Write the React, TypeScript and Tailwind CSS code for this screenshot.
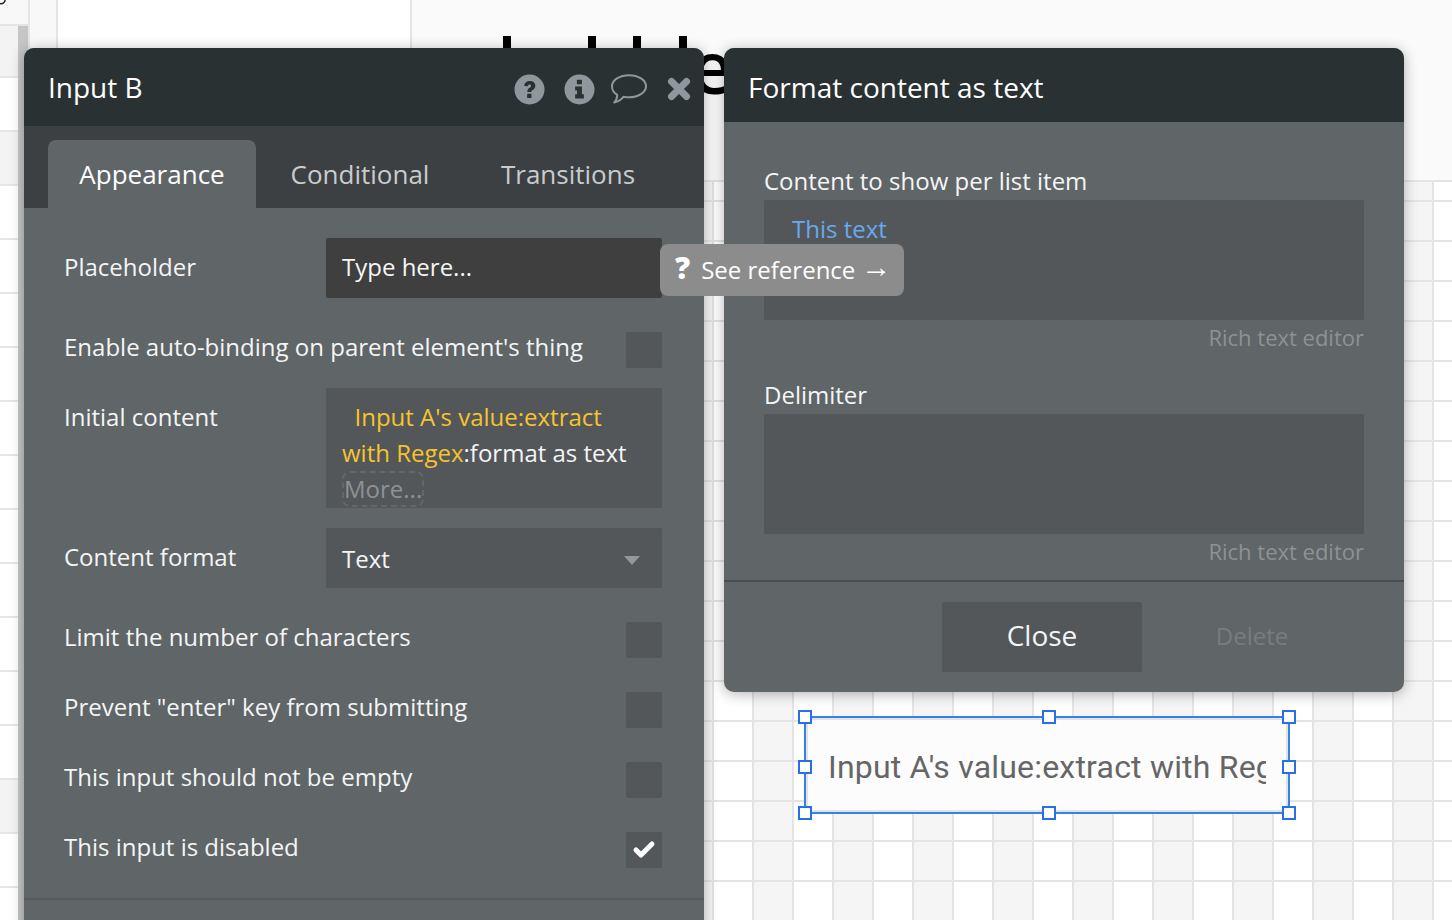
import { Check } from 'lucide-react'

const font = { fontFamily: '"Open Sans", sans-serif' }

const stripRows = [
  'h-[52px] bg-[#f3f3f3]',
  'h-[54px] bg-white',
  'h-[54px] bg-[#f3f3f3]',
  'h-[54px] bg-white',
  'h-[54px] bg-white',
  'h-[54px] bg-white',
  'h-[54px] bg-white',
  'h-[54px] bg-white',
  'h-[54px] bg-white',
  'h-[54px] bg-white',
  'h-[54px] bg-white',
  'h-[54px] bg-white',
  'h-[54px] bg-white',
  'h-[54px] bg-white',
  'h-[54px] bg-[#f3f3f3]',
  'h-[54px] bg-white',
  'h-[54px] bg-white',
]

const QuestionDot = () => (
  <svg viewBox="0 0 32 32" className="h-[31px] w-[31px]">
    <circle cx="16" cy="16" r="15.5" fill="#8f979c" />
    <path d="M10.500 12.500c.3-3.400 2.700-5.200 5.800-5.200 3.300 0 5.700 2 5.700 4.900 0 2.200-1.200 3.300-2.700 4.300-1.100.7-1.500 1.200-1.500 2.200h-4c-.1-2.200.7-3.400 2.200-4.400 1-.7 1.600-1.200 1.600-2 0-.9-.7-1.400-1.500-1.400-1 0-1.700.6-1.800 1.700z" fill="#2a3133" />
    <rect x="13.600" y="20.500" width="4.400" height="4.400" rx="0.6" fill="#2a3133" />
  </svg>
)

const InfoDot = () => (
  <svg viewBox="0 0 32 32" className="h-[31px] w-[31px]">
    <circle cx="16" cy="16" r="15.500" fill="#8f979c" />
    <rect x="13.300" y="6" width="5.200" height="4.600" rx="0.6" fill="#2a3133" />
    <path d="M11.500 12.800h7v8.200h2v4.200h-9v-4.200h2v-4h-2z" fill="#2a3133" />
  </svg>
)

const Bubble = () => (
  <svg viewBox="0 0 36 30" className="h-[30px] w-[36px]" fill="none" stroke="#8f979c" strokeWidth="2">
    <path d="M18 1.200c9.300 0 17 4.900 17 11 0 6.200-7.700 11.100-17 11.100-2 0-3.700-.2-5.400-.6-2 2.700-5.400 5-9.400 5.800 1.700-1.600 2.900-4 3.100-7.600C3 18.900 1 15.700 1 12.200c0-6.100 7.700-11 17-11z" strokeLinejoin="round" />
  </svg>
)

const CloseX = () => (
  <svg viewBox="0 0 24 24" className="h-[24px] w-[24px]" fill="none" stroke="#8f979c" strokeWidth="7" strokeLinecap="round">
    <path d="M4.500 4.500l15 15M19.500 4.500l-15 15" />
  </svg>
)

const Row = ({ label, checked }: { label: string; checked?: boolean }) => (
  <div className="flex h-[70px] items-center justify-between pl-[40px] pr-[42px]">
    <span className="-mt-[6px] text-[24px] leading-[36px] text-[#f4f5f5]">{label}</span>
    <span className="flex h-[36px] w-[36px] items-center justify-center rounded-[2px] bg-[#53575a]">
      {checked && <Check size={24} strokeWidth={5} className="text-white" />}
    </span>
  </div>
)

const Handle = ({ className }: { className: string }) => (
  <span className={`absolute h-[14px] w-[14px] border-2 border-[#2a6fe8] bg-white ${className}`} />
)

export default function App() {
  return (
    <div className="relative h-[920px] w-[1452px] overflow-hidden bg-[#fafafa]" style={font}>
      {/* left strip of the page behind */}
      <svg viewBox="0 0 8 6" className="absolute left-0 top-0 z-10 h-[6px] w-[8px]" fill="none" stroke="#222" strokeWidth="1.500">
        <path d="M0 3.500c2.500.8 4.500-.4 5.200-3.500" />
      </svg>
      <div className="absolute left-0 top-0 h-[26px] w-[28px] border-b-2 border-[#e4e4e4] bg-[#f8f8f8]" />
      <div className="absolute left-0 top-[26px] flex w-[18px] flex-col">
        {stripRows.map((row, i) => (
          <div key={i} className={`${row} shrink-0 border-b-2 border-[#e6e6e6]`} />
        ))}
      </div>
      <div className="absolute left-[18px] top-[26px] h-[894px] w-[10px] bg-[#c6c6c6]" />
      <div className="absolute left-[28px] top-0 h-[920px] w-[30px] border-x-2 border-[#e4e4e4] bg-[#f8f8f8]" />
      <div className="absolute left-[58px] top-0 h-[920px] w-[354px] border-r-2 border-[#e4e4e4] bg-white" />

      {/* canvas heading, cut off by the panels */}
      <div className="absolute left-[503px] top-[36px] flex">
        <span className="mr-[77px] h-[20px] w-[8px] bg-black" />
        <span className="mr-[37px] h-[20px] w-[8px] bg-black" />
        <span className="mr-[38px] h-[20px] w-[8px] bg-black" />
        <span className="h-[20px] w-[8px] bg-black" />
      </div>
      <span className="absolute left-[691px] top-[30px] text-[72px] font-semibold leading-[72px] text-black">e</span>

      {/* grid */}
      <div className="absolute left-[672px] top-[180px] h-[740px] w-[780px] border-t-2 border-[#e4e4e4] bg-[repeating-linear-gradient(90deg,#e4e4e4_0,#e4e4e4_2px,#f5f5f5_2px,#f5f5f5_40px,#e4e4e4_40px,#e4e4e4_42px,#ffffff_42px,#ffffff_80px)]" />
      <div className="absolute left-[672px] top-[200px] h-[720px] w-[780px] bg-[repeating-linear-gradient(180deg,#e4e4e4_0,#e4e4e4_2px,transparent_2px,transparent_40px)]" />

      {/* selected input on the canvas */}
      <div className="absolute left-[804px] top-[716px] h-[98px] w-[486px] border-2 border-[#3584e4]">
        <div className="flex h-full items-center rounded-[2px] border-2 border-[#e2e2e2] bg-[#fcfcfc] pl-[20px] pr-[20px] pt-[3px]">
          <div className="overflow-hidden whitespace-nowrap text-[32px] tracking-[0.2px] text-[#666666]" style={{ fontFamily: 'Roboto, sans-serif' }}>
            Input A's value:extract with Regex
          </div>
        </div>
        <Handle className="-left-[8px] -top-[8px]" />
        <Handle className="left-[236px] -top-[8px]" />
        <Handle className="-right-[8px] -top-[8px]" />
        <Handle className="-left-[8px] top-[42px]" />
        <Handle className="-right-[8px] top-[42px]" />
        <Handle className="-bottom-[8px] -left-[8px]" />
        <Handle className="-bottom-[8px] left-[236px]" />
        <Handle className="-bottom-[8px] -right-[8px]" />
      </div>

      {/* Input B window */}
      <div className="absolute left-[24px] top-[48px] flex h-[900px] w-[680px] flex-col rounded-t-[10px] bg-[#606568] shadow-[0_2px_14px_rgba(0,0,0,0.3)]">
        <div className="flex h-[78px] shrink-0 items-center justify-between rounded-t-[10px] bg-[#2a3133] pl-[24px] pr-[13px]">
          <span className="text-[28px] text-white">Input B</span>
          <div className="mt-[4px] flex items-center">
            <QuestionDot />
            <span className="ml-[19px]"><InfoDot /></span>
            <span className="ml-[16px]"><Bubble /></span>
            <span className="ml-[20px]"><CloseX /></span>
          </div>
        </div>
        <div className="flex h-[82px] shrink-0 items-end bg-[#3c4043] pl-[24px]">
          <div className="flex h-[68px] w-[208px] items-center justify-center rounded-t-[8px] bg-[#606568] text-[26px] text-white">Appearance</div>
          <div className="flex h-[68px] w-[208px] items-center justify-center text-[26px] text-[#c9cccd]">Conditional</div>
          <div className="flex h-[68px] w-[208px] items-center justify-center text-[26px] text-[#c9cccd]">Transitions</div>
        </div>
        <div className="flex flex-col pt-[30px]">
          <div className="flex h-[60px] items-center justify-between pl-[40px] pr-[42px]">
            <span className="pb-[2px] text-[24px] text-[#f4f5f5]">Placeholder</span>
            <div className="flex h-[60px] w-[336px] items-center rounded-[2px] bg-[#3f3f3f] px-[16px] pb-[2px] text-[24px] text-[#f4f5f5]">Type here...</div>
          </div>
          <div className="mt-[17px]">
            <Row label="Enable auto-binding on parent element's thing" />
          </div>
          <div className="mt-[3px] flex items-start justify-between pl-[40px] pr-[42px]">
            <span className="mt-[11px] text-[24px] leading-[36px] text-[#f4f5f5]">Initial content</span>
            <div className="h-[120px] w-[336px] overflow-hidden rounded-[2px] bg-[#53575a] px-[16px] pt-[11px] text-[24px] leading-[36px] text-[#f4f5f5]">
              <span className="text-[#f6c42d]">{'\u00a0\u00a0'}Input A's value:extract with Regex</span>:format as text
              <div className="w-fit rounded-[8px] border-2 border-dashed border-[#63676a] leading-[32px] text-[#8e9295]">More...</div>
            </div>
          </div>
          <div className="mt-[20px] flex items-center justify-between pl-[40px] pr-[42px]">
            <span className="pb-[2px] text-[24px] text-[#f4f5f5]">Content format</span>
            <div className="flex h-[60px] w-[336px] items-center justify-between rounded-[2px] bg-[#53575a] pl-[16px] pr-[22px] text-[24px] text-[#f4f5f5]">
              <span className="pt-[2px]">Text</span>
              <span className="mt-[4px] h-0 w-0 border-x-[8px] border-t-[9px] border-x-transparent border-t-[#92979a]" />
            </div>
          </div>
          <div className="mt-[17px] flex flex-col">
            <Row label="Limit the number of characters" />
            <Row label={'Prevent "enter" key from submitting'} />
            <Row label="This input should not be empty" />
            <Row label="This input is disabled" checked />
          </div>
          <div className="mt-[13px] border-t-2 border-[#585c5f]" />
        </div>
      </div>

      {/* Format content as text window */}
      <div className="absolute left-[724px] top-[48px] flex h-[644px] w-[680px] flex-col rounded-[10px] bg-[#606568] shadow-[0_2px_14px_rgba(0,0,0,0.3)]">
        <div className="flex h-[74px] shrink-0 items-center rounded-t-[10px] bg-[#2a3133] pl-[24px] pt-[4px] text-[28px] text-white">Format content as text</div>
        <div className="flex flex-1 flex-col px-[40px] pt-[41px]">
          <span className="pb-[1px] text-[24px] leading-[36px] text-[#f4f5f5]">Content to show per list item</span>
          <div className="h-[120px] rounded-[2px] bg-[#53575a] pl-[28px] pt-[11px] text-[24px] leading-[36px] text-[#68a9ef]">This text</div>
          <span className="mb-[1px] mt-[2px] self-end text-[22px] leading-[30px] text-[#8e9295]">Rich text editor</span>
          <span className="mb-[1px] mt-[24px] text-[24px] leading-[36px] text-[#f4f5f5]">Delimiter</span>
          <div className="h-[120px] rounded-[2px] bg-[#53575a]" />
          <span className="mt-[2px] self-end text-[22px] leading-[30px] text-[#8e9295]">Rich text editor</span>
        </div>
        <div className="flex h-[112px] shrink-0 items-start gap-[40px] border-t-2 border-[#4b4e50] pl-[218px] pt-[20px]">
          <div className="flex h-[70px] w-[200px] items-center justify-center rounded-[2px] bg-[#53575a] pb-[4px] text-[28px] text-[#f4f5f5]">Close</div>
          <div className="flex h-[70px] w-[140px] items-center justify-center pb-[2px] text-[24px] text-[#787c7f]">Delete</div>
        </div>
      </div>

      {/* tooltip */}
      <div className="absolute left-[660px] top-[244px] flex h-[52px] w-[244px] items-center rounded-[8px] bg-[#8c8c8c] pl-[15px] text-[24px] text-white">
        <span className="mr-[11px] -mt-[4px] text-[30px] font-extrabold leading-[36px]">?</span>
        <span className="-mt-[1px]">See reference</span>
        <span className="-mt-[6px] ml-[6px] text-[30px] leading-[36px]" style={{ fontFamily: '"Liberation Sans", sans-serif' }}>→</span>
      </div>
    </div>
  )
}
